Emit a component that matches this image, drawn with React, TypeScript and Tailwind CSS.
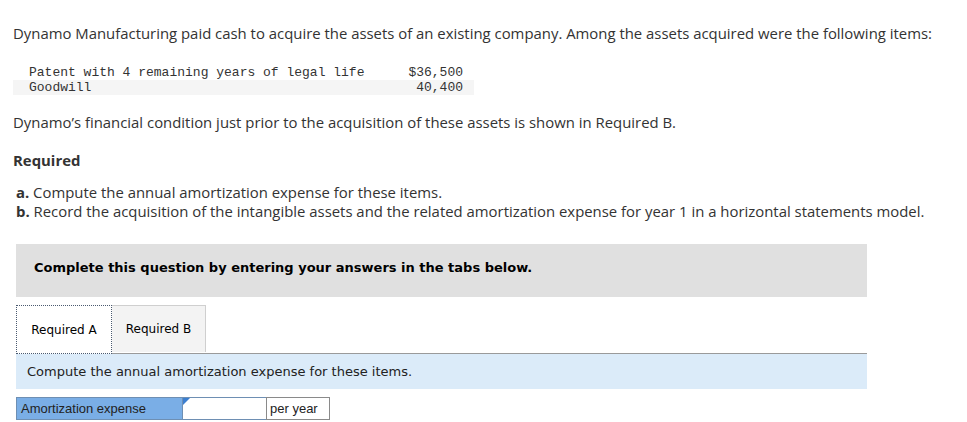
import React from "react";

const sans = "font-['Open_Sans','Noto_Sans',sans-serif]";
const verdana = "font-['DejaVu_Sans',Verdana,sans-serif]";
const mono = "font-['Liberation_Mono','Courier_New',monospace]";
const arial = "font-['Liberation_Sans',Arial,sans-serif]";

export default function App() {
  return (
    <div className="min-h-screen bg-white text-[#333] pt-[23px]">
      {/* --- INTRO --- */}
      <p className={`${sans} text-[14.9px] leading-[20px] px-[13px]`}>
        Dynamo Manufacturing paid cash to acquire the assets of an existing company. Among the assets acquired were the following items:
      </p>

      <table className={`${mono} text-[13px] leading-[15px] ml-[13px] mt-[21px] w-[461px] border-collapse`}>
        <tbody>
          <tr className="h-[16px]">
            <td className="pl-[16px] py-0">Patent with 4 remaining years of legal life</td>
            <td className="text-right pr-[11px]">$36,500</td>
          </tr>
          <tr className="bg-[#f5f5f5] h-[15px]">
            <td className="pl-[16px]">Goodwill</td>
            <td className="text-right pr-[11px]">40,400</td>
          </tr>
        </tbody>
      </table>

      <p className={`${sans} text-[14.9px] leading-[20px] px-[13px] mt-[17px]`}>
        Dynamo’s financial condition just prior to the acquisition of these assets is shown in Required B.
      </p>

      <p className={`${sans} text-[14.9px] leading-[20px] px-[13px] mt-[18px] font-bold`}>Required</p>

      <div className={`${sans} text-[14.9px] leading-[19px] px-[16px] mt-[13px]`}>
        <p>
          <b>a.</b> Compute the annual amortization expense for these items.
        </p>
        <p>
          <b>b.</b> Record the acquisition of the intangible assets and the related amortization expense for year 1 in a horizontal statements model.
        </p>
      </div>

      {/* --- QUESTION BOX --- */}
      <div className="mx-[16px] w-[851px] mt-[23px]">
        <div className={`${verdana} bg-[#e0e0e0] h-[53px] pl-[18px] pt-[14px] text-[13px] font-bold text-black`}>
          Complete this question by entering your answers in the tabs below.
        </div>

        <div className={`${verdana} flex mt-[8px] text-[12px] text-black`}>
          <div className="relative z-10 w-[96px] h-[49px] -mb-[1px] border border-dotted border-[#4a5a70] bg-white flex items-center justify-center">
            Required A
          </div>
          <div className="w-[94px] h-[47px] border border-l-0 border-b-0 border-[#cfcfcf] bg-[#f3f3f3] flex items-center justify-center">
            Required B
          </div>
        </div>

        <div className={`${verdana} bg-[#dbebf9] border-t border-[#9a9a9a] h-[36px] pl-[11px] flex items-center text-[13px] text-[#222]`}>
          Compute the annual amortization expense for these items.
        </div>

        <div className={`${arial} flex mt-[8px] h-[23px] text-[13px] text-[#222]`}>
          <div className="w-[167px] bg-[#7aaee6] border border-[#6e8fb3] pl-[4px] flex items-center">
            Amortization expense
          </div>
          <div className="relative w-[83px] bg-white border-y border-[#6e8fb3]">
            <span className="absolute left-0 top-0 w-0 h-0 border-t-[7px] border-r-[7px] border-t-[#3c7fd0] border-r-transparent" />
          </div>
          <div className="w-[64px] bg-white border border-[#8a8a8a] pl-[3px] flex items-center">per year</div>
        </div>
      </div>
    </div>
  );
}
